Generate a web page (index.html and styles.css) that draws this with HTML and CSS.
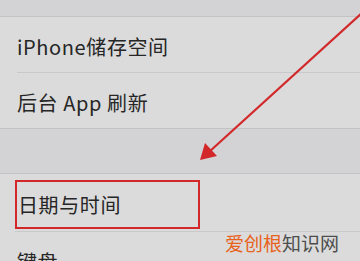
FILE: index.html
```html
<!doctype html>
<html>
<head>
	<meta charset="utf-8" />
	<title>通用</title>
	<link rel="stylesheet" href="styles.css">
</head>
<body>
	<div class="screen">
		<div class="group-gap top-gap"></div>
		<div class="group">
			<div class="cell"><span class="label">iPhone储存空间</span></div>
			<div class="cell"><span class="label">后台 App 刷新</span></div>
		</div>
		<div class="group-gap"></div>
		<div class="group">
			<div class="cell cell-marked"><span class="label mark">日期与时间</span></div>
			<div class="cell"><span class="label">键盘</span></div>
		</div>

		<svg class="arrow" width="360" height="261" viewBox="0 0 360 261">
			<line x1="364" y1="11" x2="209" y2="152" stroke="#d2282a" stroke-width="2.2" />
			<polygon points="200,160 205,143 217,156" fill="#d2282a" />
		</svg>

		<div class="watermark"><span class="wm-hot">爱创根</span>知识网</div>
	</div>
</body>
</html>
```
FILE: styles.css
```css
html, body { margin: 0; padding: 0; }
body { font-family: "Noto Sans CJK SC", "Noto Sans", sans-serif; background: #dbdbdb; }

.screen { position: relative; width: 360px; height: 261px; overflow: hidden; background: #dbdbdb; }

.group-gap { height: 44px; background: #d3d3d5; border-bottom: 1px solid #c3c3c5; }
.top-gap { height: 16px; }

.group { background: #dbdbdb; border-bottom: 1px solid #c3c3c5; }
.cell { display: flex; align-items: center; height: 55px; margin-left: 17px; border-bottom: 1px solid #c9c9cb; font-size: 20px; color: #262626; }
.group .cell:last-child { border-bottom: none; }
.cell .label { position: relative; top: 2px; letter-spacing: 0.6px; }

.cell-marked { height: 57px; margin-left: 15px; align-items: flex-start; }
.cell-marked .label.mark { top: 0; margin-top: 6px; width: 180px; height: 45px; border: 2px solid #d2282a; display: flex; align-items: center; padding-left: 1px; box-sizing: content-box; }

.arrow { position: absolute; left: 0; top: 0; pointer-events: none; }

.watermark { position: absolute; left: 225px; top: 229px; font-size: 19px; color: #4d4d4d; }
.wm-hot { color: #e8621c; }
```
